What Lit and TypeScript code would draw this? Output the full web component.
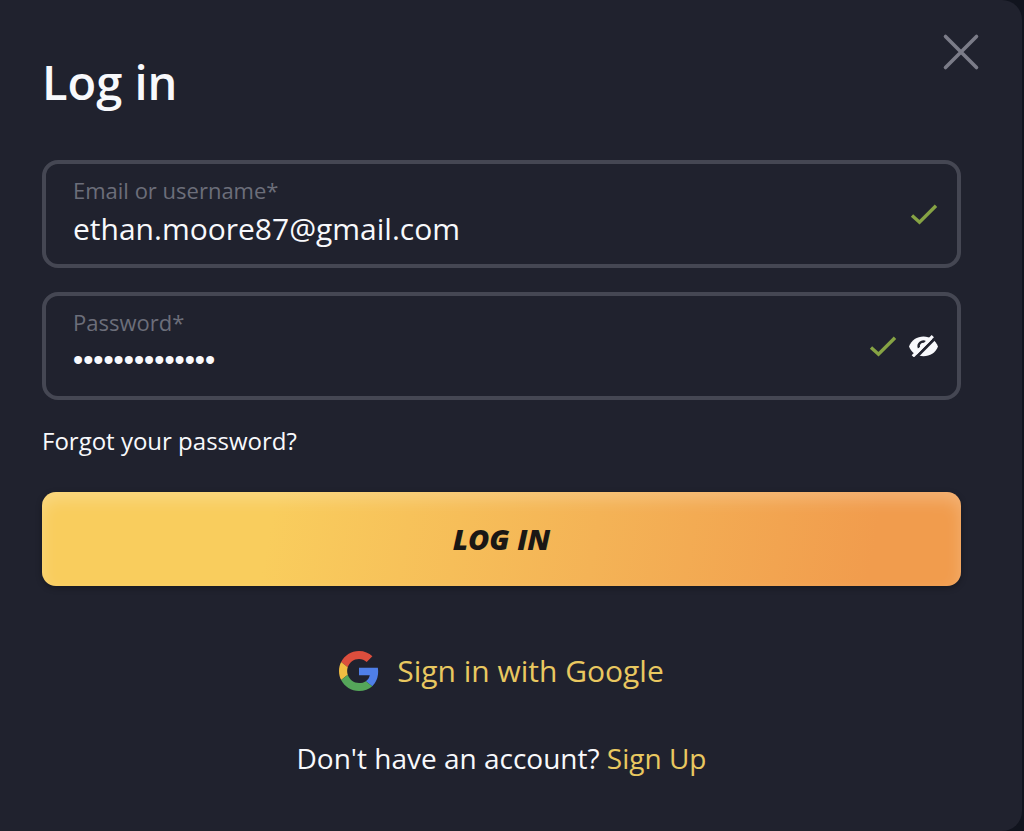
import { LitElement, html, css, svg } from "lit";
import { customElement, state } from "lit/decorators.js";

const checkIcon = html`
  <svg class="check" viewBox="0 0 28 22" aria-hidden="true">
    <path d="M2 12.500 9.500 19.200 26 2.800" fill="none" stroke="currentColor" stroke-width="3.400" />
  </svg>
`;

const eyeSlash = svg`
  <path fill="currentColor" d="M0 11.500C2.500 5 8 1.500 14.500 1.500S26.500 5 29 11.500C26.500 18 21 21.200 14.500 21.200S2.500 18 0 11.500Z" />
  <path fill="none" stroke="#20222e" stroke-width="2.400" d="M10 13a4.700 4.700 0 0 1 6.800-5.800" />
  <path stroke="#20222e" stroke-width="3" d="M6.400 23 27 2.200" />
  <path stroke="currentColor" stroke-width="3.200" d="M3.800 21.300 23.800 1.200" />
`;

@customElement("app-root")
export class AppRoot extends LitElement {
  @state() private revealed = false;

  static styles = css`
    :host {
      display: block;
      min-height: 100vh;
      background: #11141e;
      color: #f8f9fc;
      font-family: "Open Sans", "Noto Sans", sans-serif;
    }
    * {
      box-sizing: border-box;
    }
    .dialog {
      min-height: 100vh;
      margin-right: 2px;
      padding: 32px 61px 32px 42px;
      border-radius: 0 20px 20px 0;
      background: #20222e;
    }
    .head {
      display: flex;
      justify-content: space-between;
      align-items: flex-start;
      margin-right: -20px;
    }
    h1 {
      margin: 16px 0 0;
      font-size: 47px;
      line-height: 68px;
      font-weight: 600;
    }
    button {
      font: inherit;
      cursor: pointer;
    }
    .plain {
      display: block;
      padding: 0;
      border: 0;
      background: none;
      color: inherit;
    }
    .close {
      color: #7b7c88;
    }
    .close svg {
      display: block;
      width: 40px;
      height: 40px;
    }
    form {
      display: flex;
      flex-direction: column;
      align-items: stretch;
      margin-top: 44px;
    }
    .field {
      display: flex;
      align-items: center;
      gap: 12px;
      height: 108px;
      margin-bottom: 24px;
      padding: 0 19px 0 27px;
      border: 4px solid #454753;
      border-radius: 16px;
    }
    .text {
      display: flex;
      flex: 1;
      flex-direction: column;
      min-width: 0;
      padding-bottom: 4px;
    }
    label {
      color: #6c6e7a;
      font-size: 22px;
      line-height: 32px;
    }
    input {
      width: 100%;
      height: 44px;
      padding: 0;
      border: 0;
      outline: 0;
      background: none;
      color: inherit;
      font: inherit;
      font-size: 30px;
    }
    .secret[type="password"] {
      font-family: "Liberation Sans", sans-serif;
      font-size: 29px;
    }
    .check {
      width: 28px;
      height: 22px;
      color: #86a344;
    }
    .eye svg {
      display: block;
      width: 29px;
      height: 22px;
    }
    a {
      color: #e9c860;
      text-decoration: none;
    }
    .forgot {
      align-self: flex-start;
      color: inherit;
      font-size: 24px;
      line-height: 34px;
    }
    .submit {
      height: 94px;
      margin-top: 34px;
      border: 0;
      border-radius: 14px;
      background: linear-gradient(100deg, #f9cd5d 25%, #f4b356 60%, #f19c4d 90%);
      box-shadow: inset 0 8px 16px rgba(255, 255, 255, 0.22), 0 2px 6px rgba(0, 0, 0, 0.3);
      color: #1a1715;
      font-size: 29px;
      line-height: 40px;
      font-style: italic;
      font-weight: 800;
    }
    .google {
      display: flex;
      align-items: center;
      justify-content: center;
      gap: 18px;
      margin-top: 62px;
      font-size: 30px;
      line-height: 46px;
    }
    .google svg {
      width: 40px;
      height: 40px;
    }
    .signup {
      margin: 44px 0 0;
      font-size: 28px;
      line-height: 40px;
      text-align: center;
    }
  `;

  render() {
    return html`
      <main class="dialog">
        <header class="head">
          <h1>Log in</h1>
          <button class="plain close" type="button" aria-label="Close">
            <svg viewBox="0 0 40 40" aria-hidden="true">
              <path d="M4.500 4.500 35.500 35.500M35.500 4.500 4.500 35.500" stroke="currentColor" stroke-width="3.600" stroke-linecap="round" />
            </svg>
          </button>
        </header>
        <form @submit=${(e: Event) => e.preventDefault()}>
          <div class="field">
            <div class="text">
              <label for="email">Email or username*</label>
              <input id="email" type="text" value="ethan.moore87@gmail.com" autocomplete="username" />
            </div>
            ${checkIcon}
          </div>
          <div class="field">
            <div class="text">
              <label for="password">Password*</label>
              <input
                id="password"
                class="secret"
                type=${this.revealed ? "text" : "password"}
                value="mountain-river"
                autocomplete="current-password"
              />
            </div>
            ${checkIcon}
            <button
              class="plain eye"
              type="button"
              aria-label="Show password"
              @click=${() => (this.revealed = !this.revealed)}
            >
              <svg viewBox="0 0 29 22" aria-hidden="true">${eyeSlash}</svg>
            </button>
          </div>
          <a class="forgot" href="#forgot">Forgot your password?</a>
          <button class="submit" type="submit">LOG IN</button>
        </form>
        <a class="google" href="#google">
          <svg viewBox="0 0 48 48" aria-hidden="true">
            <path fill="#dc4e3d" d="M24 9.500c3.540 0 6.710 1.220 9.210 3.600l6.850-6.850C35.900 2.380 30.470 0 24 0 14.620 0 6.510 5.380 2.560 13.220l7.980 6.190C12.430 13.720 17.740 9.500 24 9.500z" />
            <path fill="#4f7fe8" d="M46.980 24.550c0-1.570-.15-3.090-.38-4.550H24v9.020h12.940c-.58 2.960-2.260 5.480-4.780 7.180l7.730 6c4.510-4.180 7.090-10.360 7.090-17.650z" />
            <path fill="#f1bd42" d="M10.530 28.590c-.48-1.450-.76-2.990-.76-4.590s.27-3.140.76-4.590l-7.980-6.190C.92 16.460 0 20.120 0 24c0 3.880.92 7.540 2.560 10.780l7.970-6.190z" />
            <path fill="#55a65a" d="M24 48c6.480 0 11.930-2.130 15.890-5.810l-7.730-6c-2.150 1.450-4.920 2.300-8.160 2.300-6.260 0-11.570-4.220-13.470-9.910l-7.980 6.190C6.510 42.620 14.620 48 24 48z" />
          </svg>
          <span>Sign in with Google</span>
        </a>
        <p class="signup">Don't have an account? <a href="#signup">Sign Up</a></p>
      </main>
    `;
  }
}
